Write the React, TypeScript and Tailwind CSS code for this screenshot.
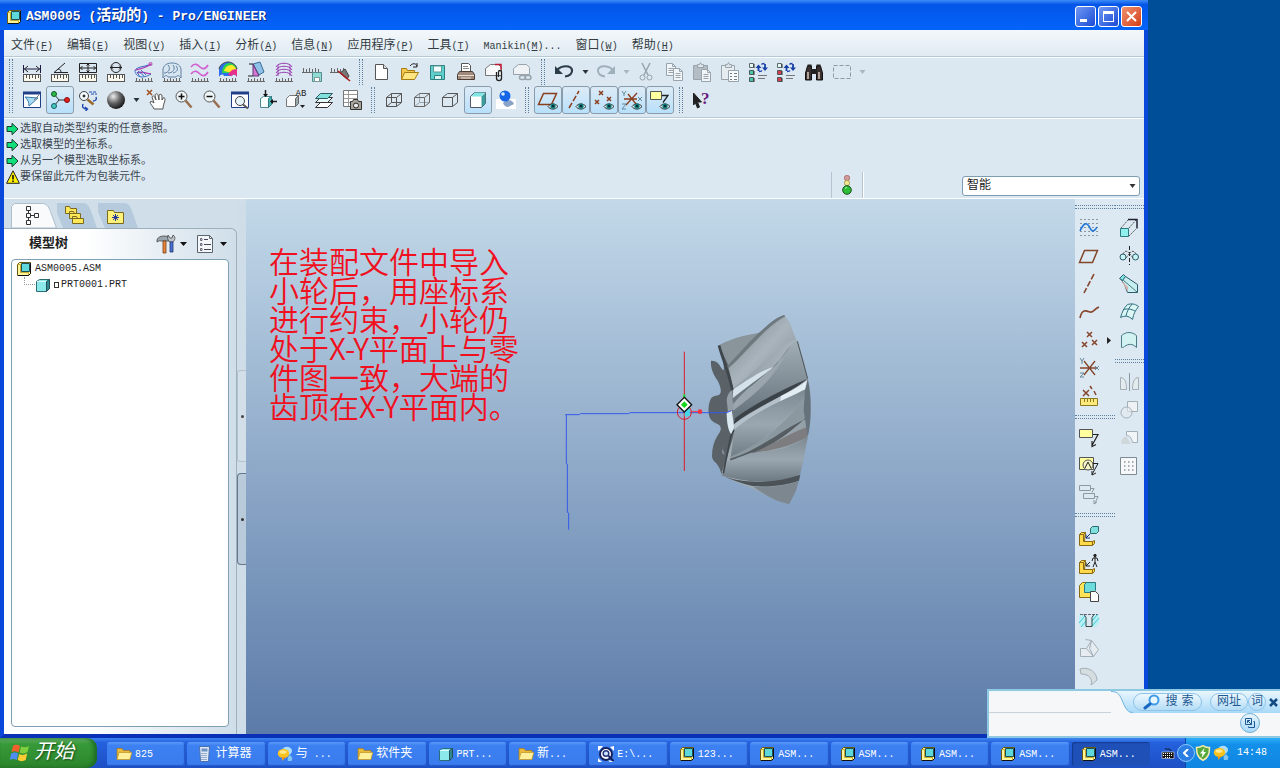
import React from "react";

type Kids = { children?: React.ReactNode };

/* Latin runs are set smaller than the ideographs so that two of them fill one square. */
function Mixed({ text, latin = "text-[10px]" }: { text: string; latin?: string }) {
  return (
    <>
      {text.split(/([\x20-\x7e]+)/).filter(Boolean).map((part, i) =>
        /^[\x20-\x7e]/.test(part) ? (
          <span key={i} className={`whitespace-pre ${latin}`}>{part}</span>
        ) : (
          <span key={i}>{part}</span>
        )
      )}
    </>
  );
}

function Svg({ children }: Kids) {
  return (
    <svg viewBox="0 0 22 22" className="h-[22px] w-[22px] shrink-0" fill="none" stroke="#222" strokeWidth="1" aria-hidden="true">
      {children}
    </svg>
  );
}

function Tool({ label, on, children }: Kids & { label: string; on?: boolean }) {
  return (
    <button
      type="button"
      aria-label={label}
      className={
        on
          ? "flex h-7 w-7 shrink-0 items-center justify-center rounded-[3px] border border-[#8a9bab] bg-linear-to-b from-[#dcebf6] to-[#b8e0fb]"
          : "flex h-7 w-7 shrink-0 items-center justify-center"
      }
    >
      <Svg>{children}</Svg>
    </button>
  );
}

function Drop({ label, muted, wide }: { label: string; muted?: boolean; wide?: boolean }) {
  return (
    <button type="button" aria-label={label} className={wide ? "flex h-7 w-[14px] items-center justify-center" : "flex h-7 w-3 items-center justify-center"}>
      <svg viewBox="0 0 7 4" className="h-1 w-[7px]" fill={muted ? "#a9b6c0" : "#2b3338"} aria-hidden="true">
        <path d="M0.5 0h6L3.5 4z" />
      </svg>
    </button>
  );
}

const Grip = () => <span className="mx-[5px] my-[1px] w-1 shrink-0 self-stretch border-x border-dotted border-[#5d7f9c]" />;
const GripRow = () => <span className="my-[5px] h-1 shrink-0 self-stretch border-y border-dotted border-[#5d7f9c]" />;

const Ruler = () => (
  <>
    <rect x="2.5" y="13.5" width="17" height="7" fill="#fbf8ee" stroke="#555" />
    <path d="M5.5 14v3M8.5 14v4M11.5 14v3M14.5 14v4M17.5 14v3" stroke="#555" />
  </>
);
const Ticks = () => <path d="M2 20.5h18M3.5 17v3M6.5 18v2M9.5 17v3M12.5 18v2M15.5 17v3M18.5 17v3" stroke="#666" />;

const Eye = () => (
  <>
    <path d="M11 17.5c2.5-3.5 7-3.5 10 0c-3 3.5-7.5 3.5-10 0z" fill="#d9ecec" stroke="#333" />
    <circle cx="16" cy="17.2" r="2.6" fill="#117a78" stroke="none" />
    <circle cx="16" cy="17" r="1" fill="#012" stroke="none" />
  </>
);

const BoxOutline = () => <path d="M3.5 8.5h10v9h-10zM8.5 4.5h10v9h-10zM3.5 8.5l5-4M13.5 8.5l5-4M13.5 17.5l5-4M3.5 17.5l5-4" stroke="#555" />;
const BoxHidden = () => (
  <>
    <path d="M8.5 5v8.5M8.5 13.5h10M3.5 17.5l5-4" stroke="#9aa7b0" />
    <path d="M3.5 8.5h10v9h-10zM3.5 8.5l5-4h10v9l-5 4M13.5 8.5l5-4" stroke="#666" />
  </>
);
const BoxClear = () => <path d="M3.5 8.5h10v9h-10zM3.5 8.5l5-4h10v9l-5 4M13.5 8.5l5-4" stroke="#555" />;
const Page = ({ x, y, c }: { x: number; y: number; c: string }) => (
  <g transform={`translate(${x} ${y})`} stroke={c} fill="#f3f6f8">
    <path d="M.5.5h6l3 3v9h-9z" />
    <path d="M6.5.5v3h3M2.5 5.5h5M2.5 7.5h5M2.5 9.5h5" fill="none" />
  </g>
);

const Flow = ({ tone }: { tone: string }) => (
  <>
    <path d="M2.5 2.5h4v4h-4z" fill="#e6f8f4" stroke="#5a6a6a" />
    <path d="M2.5 9.5h4v4h-4zM2.5 16.5h4v4h-4z" fill={tone} stroke="#4a5a5a" />
    <path d="M7 3v4M7 10v4M7 17v4" stroke="#333" />
    <path d="M11 14.5h9M11 17.5h7" stroke="#777" />
    <path d="M11.5 10V6M18 3v5" stroke="#173fa8" strokeWidth="1.8" />
    <path d="M12 10.5c1.500 0 2.500 0 3-1M17.500 2.500c-1.500 0-2.500 0-3 1" stroke="#173fa8" strokeWidth="1.5" />
    <path d="M8.5 7h6l-3-3.5zM15 6.500h6l-3 3.5z" fill="#173fa8" stroke="none" />
  </>
);

function AsmIcon({ edge = "#6a5a10" }: { edge?: string }) {
  return (
    <svg viewBox="0 0 16 16" className="h-4 w-4 shrink-0" aria-hidden="true">
      <path d="M1.5 3.5l2-2h11v11l-2 2h-11z" fill="#fff59a" stroke={edge} />
      <path d="M5.5 2.5h8v8h-8z" fill="#5fd8dc" stroke="#1d5054" />
      <path d="M1.5 3.5h3v8h8v3" fill="none" stroke="#c9a92c" />
      <path d="M14.5 2v10.5l-2 2H2" fill="none" stroke="#111" />
    </svg>
  );
}
function PartIcon() {
  return (
    <svg viewBox="0 0 16 16" className="h-4 w-4 shrink-0" aria-hidden="true">
      <path d="M1.5 4.5l3-2h10v9l-3 3h-10z" fill="#8be9ec" stroke="#2c6e78" />
      <path d="M11.5 4.5l3-2v9l-3 3z" fill="#2f8790" stroke="#24505a" />
      <path d="M2 4.5h9" stroke="#dffcff" />
    </svg>
  );
}
function FolderIcon() {
  return (
    <svg viewBox="0 0 16 16" className="h-4 w-4 shrink-0" aria-hidden="true">
      <path d="M1 13V2.5h5l1.5 2H14V13z" fill="#e9b93a" stroke="#a8761a" strokeWidth=".7" />
      <path d="M1 13.5L3 6.5h12.8L13.8 13.5z" fill="#fff09c" stroke="#c49a2c" strokeWidth=".8" />
    </svg>
  );
}
function ChatIcon() {
  return (
    <svg viewBox="0 0 16 16" className="h-4 w-4 shrink-0" aria-hidden="true">
      <ellipse cx="10" cy="5" rx="5" ry="4.2" fill="#a9ddf8" />
      <path d="M11 15c-1-3 0-5 2-6l2.5 3-1 3z" fill="#83c6f0" />
      <ellipse cx="6.5" cy="7.5" rx="5.7" ry="4.5" fill="#fbc21d" />
      <path d="M5 11l0 4 4-4z" fill="#f29a12" />
      <ellipse cx="6" cy="6" rx="3.5" ry="1.8" fill="#ffe98c" />
    </svg>
  );
}
function CalcIcon() {
  return (
    <svg viewBox="0 0 16 16" className="h-4 w-4 shrink-0" aria-hidden="true">
      <path d="M3.5 .5h10l-1 15h-8z" fill="#dfe9f6" stroke="#4a6fa8" />
      <path d="M5.5 2.5h6V5.5h-6z" fill="#6f93c4" />
      <path d="M5.5 7.5h6M5.5 9.5h6M5.5 11.5h6M5.5 13.5h6" stroke="#4f6f9c" strokeDasharray="1 1" />
    </svg>
  );
}
function FinderIcon() {
  return (
    <svg viewBox="0 0 16 16" className="h-4 w-4 shrink-0" aria-hidden="true">
      <path d="M0 0h5L2 3.5 0 5zM16 0v5l-4-4zM0 16v-4l4 4zM16 16h-4l-4-3z" fill="#fff" />
      <circle cx="8" cy="8" r="6" fill="#fff" stroke="#15205c" strokeWidth="2" />
      <circle cx="8" cy="7.5" r="2.8" fill="#cfe0ff" stroke="#24347a" strokeWidth="1.5" />
      <path d="M10.5 10l5 5" stroke="#15205c" strokeWidth="2" />
    </svg>
  );
}

const menus: [string, string, string][] = [
  ["文件", "F", ""], ["编辑", "E", ""], ["视图", "V", ""], ["插入", "I", ""], ["分析", "A", ""], ["信息", "N", ""],
  ["应用程序", "P", ""], ["工具", "T", ""], ["Manikin", "M", "..."], ["窗口", "W", ""], ["帮助", "H", ""],
];

function TitleBar() {
  return (
    <header className="flex h-[30px] shrink-0 items-center gap-1 bg-linear-to-b from-[#3c8cf8] from-0% via-[#0455e8] via-15% to-[#0464fa] pt-[3px] pr-[6px] pl-[6px]">
      <AsmIcon />
      <h1 className="flex-1 text-[15px] leading-5 font-bold whitespace-nowrap text-white [text-shadow:1px_1px_0_#0a2a80]">
        <Mixed text="ASM0005 (活动的) - Pro/ENGINEER" latin="text-[13px]" />
      </h1>
      <div className="flex gap-[2px]">
        <button type="button" aria-label="最小化" className="flex h-[21px] w-[21px] items-end rounded-[3px] border border-white bg-linear-to-br from-[#6f97f3] to-[#1b48d4] pb-1 pl-1">
          <span className="h-[3px] w-[7px] bg-white" />
        </button>
        <button type="button" aria-label="最大化" className="flex h-[21px] w-[21px] items-center justify-center rounded-[3px] border border-white bg-linear-to-br from-[#6f97f3] to-[#1b48d4]">
          <span className="h-[11px] w-[11px] border border-t-[3px] border-white" />
        </button>
        <button type="button" aria-label="关闭" className="flex h-[21px] w-[21px] items-center justify-center rounded-[3px] border border-white bg-linear-to-br from-[#f0906e] to-[#d33a0c]">
          <svg viewBox="0 0 11 11" className="h-[11px] w-[11px]" stroke="#fff" strokeWidth="2" aria-hidden="true"><path d="M1 1l9 9M10 1l-9 9" /></svg>
        </button>
      </div>
    </header>
  );
}

function ToolRows() {
  const brown = "#8b3e1d";
  const mute = "#98a3ab";
  return (
    <div className="shrink-0 overflow-hidden border-t border-b border-t-[#b4cad8] border-b-[#b4cad8] pt-[1px] pb-[3px] shadow-[inset_0_1px_0_#fff]">
      <div className="flex h-7 items-center">
        <Grip />
        <Tool label="距离"><path d="M2.5 4v8M19.5 4v8M3 8h16" stroke="#1a1a3a" /><path d="M7 5L3.5 8 7 11M15 5l3.5 3-3.5 3" /><Ruler /></Tool>
        <Tool label="角"><path d="M16 2L5 11.5h14M9 8c2 0 3 1 3 3.5" /><Ruler /></Tool>
        <Tool label="区域"><path d="M2.5 2.5h17v9h-17zM11 3v8M3 7h16" /><path d="M5.5 5L3.5 7l2 2M16.5 5l2 2-2 2M9.5 4.5L11 3l1.5 1.5M9.5 9.5L11 11l1.5-1.5" /><Ruler /></Tool>
        <Tool label="直径"><circle cx="11" cy="6.5" r="5" /><path d="M5 6.5h12M8 4.5l-2 2 2 2M14 4.5l2 2-2 2" /><Ruler /></Tool>
        <Tool label="曲率"><path d="M2 9c5-1 9-1 16-6M4 12c4-2 8 0 14 1" stroke="#b23cb0" strokeWidth="1.4" /><path d="M2 9c0 4 2 6 6 7 4 0 7-1 10-3M3 8c4-3 8-2 12-4M5 10l6 5M8 9l5 5M4 11l3 5" stroke="#3d6fc4" /><circle cx="17.5" cy="3" r="1.5" stroke="#b23cb0" /><Ticks /></Tool>
        <Tool label="截面"><path d="M2 8C3 3 8 2 11 2s8 1 9 6v9c-2-3-4-3-5-1H7c-1-2-3-2-5 1z" fill="#d8e6f2" stroke="#5f7f9f" /><path d="M3 12c5 0 7-5 4-8M7 12c5 0 8-4 5-8M12 12c4-1 6-4 3-7" stroke="#5f7f9f" /><Ticks /></Tool>
        <Tool label="偏移"><path d="M2 6c4-5 7-2 9 0s5 3 8-2M2 13c4-5 7-2 9 0s5 3 8-2" stroke="#d25fd0" strokeWidth="1.6" /><Ticks /></Tool>
        <Tool label="着色曲率">
          <path d="M2 8C3 3 8 1 11 1s8 2 9 7v8c-2-3-4-3-5-1H7c-1-2-3-2-5 1z" fill="#2b6ff0" stroke="none" />
          <path d="M5 12c0-6 3-10 8-10 4 1 7 3 7 6l-4 4z" fill="#2bd24e" stroke="none" />
          <path d="M7 10c1-4 4-6 8-6 3 1 4 3 4 5l-4 3z" fill="#ffe92b" stroke="none" />
          <path d="M11 14c1-3 4-6 9-6v8c-2-3-4-3-5-1z" fill="#e8308a" stroke="none" />
          <path d="M2 8C3 3 8 1 11 1s8 2 9 7" stroke="#444" /><Ticks />
        </Tool>
        <Tool label="拔模"><path d="M8 3l7-2 4 10-5 3z" fill="#8fc2e8" stroke="#3a6a94" /><path d="M8 3v12h6z" fill="#d774d4" stroke="#5a3a74" /><path d="M4 3h4M8 15H3" /><Ticks /></Tool>
        <Tool label="斜率"><path d="M3 6C5 1 17 1 19 6M3 9C5 4 17 4 19 9M3 12C5 7 17 7 19 12M3 15c2-5 14-5 16 0M5 4v11M17 4v11" stroke="#9a3fb0" /><Ticks /></Tool>
        <Tool label="保存分析"><path d="M1 11.5h18M2.5 7v4M5.5 8v3M8.5 7v4M11.5 8v3M14.5 7v4M17.5 8v3" stroke="#666" /><path d="M11.5 11.5h9v9h-9z" fill="#8fdcd4" stroke="#5a8a8a" /><path d="M13.5 16.5h5v4h-5z" fill="#fff" stroke="#7a9a9a" /></Tool>
        <Tool label="隐藏分析"><path d="M1 11.5h14M2.5 7v4M5.5 8v3M8.5 7v4M11.5 8v3M14.5 7v4" stroke="#666" /><path d="M11 12l7 6 2-3-4-7z" fill="#777" stroke="#444" /><path d="M9 10l12 10" stroke="#b01818" strokeWidth="1.5" /></Tool>
        <Grip />
        <Tool label="新建"><path d="M4.5 3.5h8l4 4v11h-12z" fill="#fff" stroke="#555" /><path d="M12.5 3.5v4h4" fill="#ddd" stroke="#555" /></Tool>
        <Tool label="打开"><path d="M2.5 18.5v-11h5l1 2h7v3" fill="#f2c94c" stroke="#a87c14" /><path d="M2.5 18.5l3-7h14l-4 7z" fill="#ffe680" stroke="#a87c14" /><path d="M11 5c2-3 6-3 7 0M18 2v4h-4" /></Tool>
        <Tool label="保存"><path d="M3.5 4.5h14v14h-14z" fill="#5fcfcb" stroke="#2c8080" /><path d="M6.5 5h8v6h-8z" fill="#f4fbfb" stroke="#5a9a9a" /><path d="M7.5 14.5h7v4h-7z" fill="#e0f4f4" stroke="#2c8080" /></Tool>
        <Tool label="打印"><path d="M6.5 11V2.5h7l2 2V11" fill="#fff" stroke="#555" /><path d="M8 5.5h5M8 7.5h6" stroke="#888" /><path d="M2.5 13.5l2-3h13l2 3v5h-17z" fill="#a08a7c" stroke="#4c3c34" /><path d="M3 14.5h16M6 17h10" stroke="#e8dcd0" /></Tool>
        <Tool label="发送"><path d="M2.5 14.5v-7l5-4h8l3 3v8z" fill="#f8fafb" stroke="#777" /><path d="M12 3.5l6 0v5" stroke="#c01830" strokeWidth="1.5" /><path d="M13.5 11v6c0 3.5 5 3.5 5 0v-6c0-2-3-2-3 0v5" strokeWidth="1.3" /></Tool>
        <Tool label="发送链接"><path d="M2.5 13.5v-6l5-4h8l3 3v7z" fill="#eef2f4" stroke={mute} /><rect x="8.5" y="14.5" width="6" height="4" rx="2" stroke={mute} strokeWidth="1.5" /><rect x="14" y="14.5" width="6" height="4" rx="2" stroke={mute} strokeWidth="1.5" /></Tool>
        <Grip />
        <Tool label="撤消"><path d="M4 9c5-5 14-5 15 0 .5 3-2 6-7 6.500" stroke="#2c3d4a" strokeWidth="2.2" /><path d="M2 5v8h8z" fill="#2c3d4a" stroke="none" /></Tool>
        <Drop label="撤消列表" wide />
        <Tool label="重做"><path d="M18 9C13 4 4 4 3 9c-.5 3 2 6 7 6.500" stroke="#9fb0bb" strokeWidth="2" /><path d="M20 5v8h-8z" fill="#9fb0bb" stroke="none" /></Tool>
        <Drop label="重做列表" muted />
        <Tool label="剪切"><path d="M7 2l6 12M15 2L9 14" stroke={mute} strokeWidth="1.5" /><circle cx="7.5" cy="16.5" r="2.5" stroke={mute} /><circle cx="14.5" cy="16.5" r="2.5" stroke={mute} /></Tool>
        <Tool label="复制"><Page x={3} y={2} c={mute} /><Page x={10} y={7} c={mute} /></Tool>
        <Tool label="粘贴"><path d="M2.5 4.5h14v14h-14z" fill="#b4bdc3" stroke={mute} /><path d="M6.5 6.5v-3h2l1-2 1 2h2v3z" fill="#dde4e8" stroke={mute} /><Page x={10} y={8} c={mute} /></Tool>
        <Tool label="选择性粘贴"><path d="M2.5 4.5h13v14h-13z" fill="#e6edf1" stroke={mute} /><path d="M6.5 6.5v-3h2l1-2 1 2h2v3z" fill="#dde4e8" stroke={mute} /><path d="M9.5 9.5h10v11h-10z" fill="#f7f9fa" stroke={mute} /><path d="M11 12.5h2M15 12.5h3M11 15.5h2M15 15.5h3M11 18.5h2M15 18.5h3" stroke="#6f7c86" /></Tool>
        <Tool label="再生"><Flow tone="#49c9a8" /></Tool>
        <Tool label="再生管理器"><Flow tone="#e03a50" /></Tool>
        <Tool label="查找"><path d="M2.5 19V12l2-7h4v14zM19.5 19V12l-2-7h-4v14z" fill="#3a3030" stroke="#111" /><path d="M8 8h6v5H8z" fill="#222" stroke="none" /><path d="M5 11v7M16 11v7" stroke="#d8c8b8" strokeWidth="1.5" /><path d="M4.5 4.5h4M13.5 4.5h4" strokeWidth="2" /></Tool>
        <Tool label="选择框"><path d="M2.5 4.5h17v13h-17z" stroke="#8f9aa2" strokeDasharray="4 2" /></Tool>
        <Drop label="选择框列表" muted />
      </div>
      <div className="flex h-7 items-center">
        <Grip />
        <Tool label="重画"><path d="M2.5 3.5h17v15h-17z" fill="#fff" stroke="#1f3f88" /><path d="M2 2.5h18v3H2z" fill="#1f3f88" stroke="none" /><path d="M4 8l13 1-9 8c0-4-1-6-4-9z" fill="#a8dcf4" stroke="#3a7aa8" /><path d="M18 6l-5 5" stroke="#777" /></Tool>
        <Tool label="旋转中心" on><path d="M5 5l5 6h8M5 17l5-6" stroke="#333" /><circle cx="5" cy="5" r="2.5" fill="#2fb84a" stroke="#115c20" /><circle cx="5" cy="17" r="2.5" fill="#45c8c4" stroke="#15605c" /><circle cx="18" cy="11" r="2.5" fill="#e81c1c" stroke="#801010" /></Tool>
        <Tool label="方向模式"><circle cx="7" cy="7" r="4.5" fill="#f2f8fb" stroke="#444" /><circle cx="7" cy="7" r="1" fill="#222" /><path d="M10.5 10.5l6 5" stroke="#9a6a2c" strokeWidth="2.5" /><path d="M12 3h7M14 5h6" stroke="#1e46b0" strokeDasharray="3 1" /><path d="M19 8c1 3-1 4-3 4M6 15c-1 3 0 5 4 5M8 18l2.5 2-2 2" stroke="#1e46b0" strokeWidth="1.4" /></Tool>
        <Tool label="外观库">
          <defs><radialGradient id="ball" cx=".35" cy=".3" r=".75"><stop offset="0" stopColor="#eee" /><stop offset=".5" stopColor="#666" /><stop offset="1" stopColor="#111" /></radialGradient></defs>
          <circle cx="11" cy="11" r="9" fill="url(#ball)" stroke="none" />
        </Tool>
        <Drop label="外观列表" />
        <Tool label="平移"><path d="M2 1l5 5M7 1L2 6" stroke="#a05020" strokeWidth="1.5" /><path d="M9 20c-1-3-4-5-4-7 1-1 3 0 4 1L7 8c1-2 2-1 3 1l1 2-1-5c1-2 3-1 3 0l1 5 0-5c1-1 3-1 3 1v4l1-2c2-1 2 1 2 2-.5 3-2 5-2 9z" fill="#fff" stroke="#555" /></Tool>
        <Tool label="放大"><circle cx="8.5" cy="7.5" r="5.5" fill="#eef6f8" stroke="#555" /><path d="M5.5 7.5h6M8.5 4.5v6" stroke="#111" strokeWidth="1.5" /><path d="M12.5 11.5l6 7" stroke="#9a6e4c" strokeWidth="2.5" /></Tool>
        <Tool label="缩小"><circle cx="8.5" cy="7.5" r="5.5" fill="#eef6f8" stroke="#555" /><path d="M5.5 7.5h6" stroke="#111" strokeWidth="1.5" /><path d="M12.5 11.5l6 7" stroke="#9a6e4c" strokeWidth="2.5" /></Tool>
        <Tool label="重新调整"><path d="M2.5 3.5h17v15h-17z" fill="#fff" stroke="#1f3f88" /><path d="M2 2.5h18v3H2z" fill="#1f3f88" stroke="none" /><circle cx="11" cy="12" r="4.5" fill="#e6f4fa" stroke="#444" /><path d="M14 15.5l5 4" stroke="#555" strokeWidth="2" /></Tool>
        <Tool label="重定向"><path d="M3.5 9.5l3-2h8v8l-3 3h-8z" fill="#f8ffff" stroke="#4a8a90" /><path d="M11.5 9.5l3-2v8l-3 3z" fill="#48b8b4" stroke="#2c7a80" /><path d="M8.5 1v6M20 12.5h-6" strokeWidth="1.5" /><path d="M6 5h5l-2.5 3zM16 10v5l-3-2.5z" fill="#111" stroke="none" /></Tool>
        <Tool label="已命名视图"><path d="M1.5 9.5l3-3h9v8l-3 3h-9z" fill="#f8fafb" stroke="#777" /><path d="M10.5 9.5l3-3v8l-3 3z" fill="#9aa" stroke="#666" /><text x="10.5" y="7" fontSize="9" fill="#222" stroke="none" fontFamily="Liberation Mono">AB</text><path d="M15 16h5l-2.5 3z" fill="#222" stroke="none" /></Tool>
        <Tool label="层"><path d="M2.5 18.5l5-5h12l-5 5z" fill="#fff" stroke="#333" /><path d="M2.5 13.5l5-5h12l-5 5z" fill="#e6fafa" stroke="#333" /><path d="M2.5 9.5l5-5h12l-5 5z" fill="#7fe0de" stroke="#2c5a60" /></Tool>
        <Tool label="视图管理器"><path d="M2.5 1.5h14v16h-14z" fill="#fff" stroke="#777" /><path d="M3 5.5h13M3 9.5h13M3 13.5h13M7.5 2v15" stroke="#999" /><path d="M9.5 12.5h2l1-2h4l1 2h3v8h-11z" fill="#a8a49c" stroke="#333" /><circle cx="15" cy="16.5" r="2.5" fill="#eee" /></Tool>
        <Grip />
        <Tool label="线框"><BoxOutline /></Tool>
        <Tool label="隐藏线"><BoxHidden /></Tool>
        <Tool label="消隐"><BoxClear /></Tool>
        <Tool label="着色" on><path d="M3.5 7.5l4-4h11v11l-4 4h-11z" fill="#fff" stroke="#556" /><path d="M4 7.5l4-4h10l-4 4z" fill="#7fe6e4" stroke="none" /><path d="M14.5 7.5l4-4v11l-4 4z" fill="#3c9c9c" stroke="none" /></Tool>
        <Tool label="增强真实感"><path d="M1 10h20v10H1z" fill="#fff" stroke="none" /><path d="M8 14c3-4 9-4 11 1l-6 3c-3 0-4-2-5-4z" fill="#8aa4c8" stroke="none" /><circle cx="10" cy="7" r="5.5" fill="#1766e8" stroke="none" /><circle cx="8" cy="5" r="1.8" fill="#d8ecff" stroke="none" /></Tool>
        <Grip />
        <Tool label="基准平面显示" on><path d="M1.5 15.5l5-11h13l-5 11z" stroke={brown} strokeWidth="1.5" /><Eye /></Tool>
        <Tool label="基准轴显示" on><path d="M4 19L14 2" stroke={brown} strokeWidth="1.5" strokeDasharray="6 2" /><Eye /></Tool>
        <Tool label="基准点显示" on><path d="M6 2l4 4M10 2L6 6M2 11l4 4M6 11l-4 4M14 8l4 4M18 8l-4 4" stroke={brown} strokeWidth="1.5" /><Eye /></Tool>
        <Tool label="坐标系显示" on><path d="M3 10h13M5 16L16 4M7 5l8 10" stroke={brown} strokeWidth="1.3" /><path d="M1 2l2 3 2-3M3 5v2M1 15h4l-4 5h4M17 8l4 4M21 8l-4 4" stroke="#5f8ca0" /><Eye /></Tool>
        <Tool label="注释显示" on><path d="M1.5 2.5h11v8h-11z" fill="#ffffa0" stroke="#555" /><path d="M13 6.5h6l-5 7" strokeWidth="1.3" /><Eye /></Tool>
        <Grip />
        <Tool label="上下文帮助"><path d="M2.5 4l8 9h-4l2 5-2 1-2-5-2 2z" fill="#222" /><text x="10" y="15" fontSize="17" fontWeight="bold" fill="#6b1a80" stroke="none" fontFamily="Liberation Serif">?</text></Tool>
      </div>
    </div>
  );
}

const messages = [
  { warn: false, text: "选取自动类型约束的任意参照。" },
  { warn: false, text: "选取模型的坐标系。" },
  { warn: false, text: "从另一个模型选取坐标系。" },
  { warn: true, text: "要保留此元件为包装元件。" },
];

function MessageArea() {
  return (
    <div className="flex h-[81px] shrink-0 items-end border-b border-white shadow-[inset_0_1px_0_#fff]">
      <ul className="flex-1 self-start pt-[3px] pl-[2px] text-[11px] leading-4 text-[#3c4650]">
        {messages.map((m) => (
          <li key={m.text} className="flex h-4 items-center">
            <svg viewBox="0 0 14 14" className="h-[14px] w-[14px] shrink-0" aria-hidden="true">
              {m.warn ? (
                <>
                  <path d="M7 .8L13.4 13.3H.6z" fill="#fff200" stroke="#222" />
                  <path d="M7 5v4.5M7 10.5v1.5" stroke="#111" strokeWidth="1.6" />
                </>
              ) : (
                <path d="M1 4.5h5V1.3L12 7l-6 5.7V9.5H1z" fill="#0fe07c" stroke="#1c3a2c" />
              )}
            </svg>
            <span>{m.text}</span>
          </li>
        ))}
      </ul>
      <div className="mr-[99px] flex h-[26px] w-8 items-center justify-center border-x border-[#b4c4d0] shadow-[1px_0_0_#fff]">
        <svg viewBox="0 0 12 20" className="h-5 w-3" aria-hidden="true">
          <rect x="3.5" y=".5" width="5" height="5" rx="2" fill="#d49a98" stroke="#a87070" />
          <rect x="3.5" y="5.5" width="5" height="5" rx="2" fill="#f0e48c" stroke="#a89c50" />
          <circle cx="6" cy="15" r="4.3" fill="#2ebd36" stroke="#174f1a" />
          <path d="M4 13.5l2-1.5" stroke="#b8ffb8" />
        </svg>
      </div>
      <div className="relative mr-1 mb-[2px] flex h-5 w-[178px]">
        <select aria-label="选择过滤器" className="h-5 w-full appearance-none rounded-[3px] border border-[#7d9db2] bg-white pl-1 text-[12px] leading-[18px] text-[#222]">
          <option>智能</option>
        </select>
        <svg viewBox="0 0 7 4" className="pointer-events-none absolute top-2 right-1 h-1 w-[7px]" fill="#333" aria-hidden="true"><path d="M.5 0h6l-3 4z" /></svg>
      </div>
    </div>
  );
}

function LeftPanel() {
  return (
    <aside className="flex w-[242px] shrink-0 bg-[#d0dee9] pt-1">
      <div className="flex min-w-0 flex-1 flex-col">
        <div className="flex h-[25px] pl-[7px]">
          <button type="button" aria-label="模型树" className="flex w-[46px] items-center">
            <svg viewBox="0 0 46 25" className="h-[25px] w-[46px]" aria-hidden="true">
              <path d="M.5 25V3.5l3-3h28c4 0 6 3 8 8l6 16.5z" fill="#f8fafc" stroke="#aebfcc" />
              <path d="M15.5 3.5h4v4h-4zM15.5 10.5h4v4h-4zM15.5 17.5h4v4h-4zM23.5 10.5h4v4h-4z" fill="#fff" stroke="#333" />
              <path d="M17.5 8v2M17.5 15v2M20 12.5h3" stroke="#333" />
            </svg>
          </button>
          <button type="button" aria-label="文件夹浏览器" className="flex w-[41px] items-center">
            <svg viewBox="0 0 41 25" className="h-[25px] w-[41px]" aria-hidden="true">
              <path d="M-4 0h30c4 0 6 3 8 8l6 17H6z" fill="#b5cbdd" />
              <path d="M8.5 10.5v-7h4l1 2h6v5zM12.5 15.5v-7h4l1 2h6v5zM15.5 20.5v-7h4l1 2h6v5z" fill="#ffe75a" stroke="#7a6a20" />
            </svg>
          </button>
          <button type="button" aria-label="收藏夹" className="flex w-[43px] items-center">
            <svg viewBox="0 0 43 25" className="h-[25px] w-[43px]" aria-hidden="true">
              <path d="M-4 0h30c5 0 6 3 8 8l6 17H7z" fill="#b5cbdd" />
              <path d="M9.5 20.5v-13h6l1 2h9v11z" fill="#fff27a" stroke="#7a6a20" />
              <path d="M17.5 11v7M14 14.5h7M15 12l5 5M20 12l-5 5" stroke="#24389c" />
            </svg>
          </button>
        </div>
        <div className="flex min-h-0 flex-1 flex-col rounded-tr-md border-t border-r border-[#9fb0bd] bg-linear-to-r from-white from-35% to-[#cfdee9] pr-[7px] pb-[7px] pl-[7px]">
          <div className="flex h-[30px] items-center">
            <h2 className="flex-1 pl-[18px] text-[13px] leading-5 font-bold text-[#222]">模型树</h2>
            <button type="button" aria-label="设置" className="flex items-center gap-1 pr-[9px]">
              <svg viewBox="0 0 20 20" className="h-5 w-5" aria-hidden="true">
                <path d="M1 6c1-4 7-5 12-3v4H5C3 6 2 8 1 8z" fill="#9aa6ae" stroke="#444" strokeWidth=".8" />
                <path d="M7 7h3v12H7z" fill="#e8873c" stroke="#7a3c14" strokeWidth=".8" />
                <path d="M12 1l2 3h2l1-3c3 2 2 5 0 7h-3c-2-1-3-4-2-7z" fill="#bcc4c9" stroke="#444" strokeWidth=".8" />
                <path d="M14 8h3v10h-3z" fill="#4a72d4" stroke="#1c3474" strokeWidth=".8" />
              </svg>
              <svg viewBox="0 0 7 4" className="h-1 w-[7px]" aria-hidden="true"><path d="M0 0h7L3.5 4z" fill="#111" /></svg>
            </button>
            <button type="button" aria-label="显示" className="flex items-center gap-1 pr-[2px]">
              <svg viewBox="0 0 20 20" className="h-5 w-5" aria-hidden="true">
                <path d="M1.5 1.5h12l3 3v14h-15z" fill="#f4f7fa" stroke="#5a6570" />
                <path d="M13.5 1.5v3h3" fill="none" stroke="#5a6570" />
                <path d="M8 5.5h4M8 10.5h7M8 15.5h7" stroke="#445" />
                <path d="M4.5 4.5h1.5v2H4.5zM4.5 9.5h1.5v2H4.5zM4.5 14.5h1.5v2H4.5z" fill="#fff" stroke="#445" strokeWidth=".8" />
              </svg>
              <svg viewBox="0 0 7 4" className="h-1 w-[7px]" aria-hidden="true"><path d="M0 0h7L3.5 4z" fill="#111" /></svg>
            </button>
          </div>
          <ul className="min-h-0 flex-1 rounded-[4px] border border-[#7fa0b2] bg-white text-[10px] leading-4 text-[#222]">
            <li className="flex h-[17px] items-center gap-[3px] pl-1"><AsmIcon /><span>ASM0005.ASM</span></li>
            <li className="flex h-4 items-center pl-[12px]">
              <span className="mb-2 h-2 w-[11px] border-b border-l border-dotted border-[#999]" />
              <PartIcon />
              <span className="mr-[2px] ml-[3px] h-[6px] w-[5px] border border-[#333]" />
              <span>PRT0001.PRT</span>
            </li>
          </ul>
        </div>
      </div>
      <div className="flex w-[9px] flex-col justify-start gap-[11px] bg-[#cfdde8] pt-[167px]">
        <button type="button" aria-label="折叠导航器" className="flex h-[92px] items-center justify-center rounded-l-[3px] border border-r-0 border-[#b4c3cf] bg-[#d2dfe9]"><span className="h-[3px] w-[3px] rounded-full bg-[#444]" /></button>
        <button type="button" aria-label="展开浏览器" className="flex h-[92px] items-center justify-center rounded-l-[4px] border border-r-0 border-[#68788a] bg-[#b9cadb]"><span className="h-[3px] w-[3px] rounded-full bg-[#333]" /></button>
      </div>
    </aside>
  );
}

const noteLines = ["在装配文件中导入", "小轮后，用座标系", "进行约束，小轮仍", "处于X-Y平面上与零", "件图一致，大端的", "齿顶在X-Y平面内。"];

function Viewport() {
  return (
    <main className="relative min-w-0 flex-1 overflow-hidden bg-linear-to-b from-[#c3d9e9] to-[#5c7ba8]">
      <p className="pt-[47px] pl-[23px] font-['Liberation_Sans_Narrow','Noto_Sans_CJK_SC',sans-serif] text-[30px] leading-[29px] font-[350] whitespace-nowrap text-[#f01020]">
        {noteLines.map((line) => (
          <span key={line} className="block">{line}</span>
        ))}
      </p>
      <svg viewBox="60 0 780 720" className="absolute top-[101px] left-[314px] h-[240px] w-[260px]" fill="none" aria-label="小轮模型">
        <defs>
          <linearGradient id="toothA" x1="0" y1="0" x2="1" y2="1"><stop offset="0" stopColor="#78838b" /><stop offset=".5" stopColor="#a9b4bc" /><stop offset="1" stopColor="#7f8b94" /></linearGradient>
          <linearGradient id="toothB" x1="0" y1="0" x2="0" y2="1"><stop offset="0" stopColor="#a3afb7" /><stop offset="1" stopColor="#626e77" /></linearGradient>
          <linearGradient id="toothC" x1="0" y1="0" x2="0" y2="1"><stop offset="0" stopColor="#7d8991" /><stop offset=".5" stopColor="#9aa7b1" /><stop offset="1" stopColor="#6d7981" /></linearGradient>
        </defs>
        <path d="M513 182c12 0 20 4 26 14 6 10 10 16 12 14 2-8-2-24-2-34l-12-38 60 40 30 120-20 150-62 80c-2-16-8-28-16-38-6-6-12-10-13-22 0-24 6-44 16-60 8-12 14-20 8-30-6-8-20-8-28-20-10-14-8-50 2-64 6-8 22-6 26-12 6-10 0-26-7-40-14-20-22-40-20-60z" fill="#5a6267" />
        <path d="M537 136l20-10 50-16 48-10 35-30 42-25 18 25 20 52 22 60 12 56 8 60-1 60-10 60-15 80-18 45-20 69-48-15-60-30-50-20-47-22 20-60 18-60-2-90-2-60-12-60z" fill="url(#toothA)" />
        <path d="M540 136c40-22 70-30 115-36L570 205z" fill="#89949b" />
        <path d="M655 100c25-20 45-45 77-55l4 4c-50 25-110 95-172 160l-3-10c35-36 62-68 94-99z" fill="#6d777e" />
        <path d="M736 50c14 20 20 40 30 68-70 30-110 90-186 146l-14-60c60-50 110-120 170-154z" fill="url(#toothA)" />
        <path d="M766 118l9 6 28 112-100 52c-60 36-90 60-122 82l-2-38c60-60 120-110 174-196z" fill="url(#toothB)" />
        <path d="M752 136c-40 90-104 146-170 194l-2-20c70-60 120-100 172-174z" fill="#9aa5ad" />
        <path d="M700 200c-30 30-80 60-122 94l2-26c50-34 84-56 120-68z" fill="#d4e1ea" />
        <path d="M752 136c-30 50-70 80-110 116-30 22-48 42-62 60l-2-16c50-42 90-66 132-104z" fill="#6d777e" />
        <path d="M803 236c-60 50-150 80-223 138l6-20c60-44 140-86 217-118z" fill="#3c4348" />
        <path d="M803 240l-4 26c-60 40-140 60-214 120l-5-12c70-50 150-84 223-134z" fill="#b4c1cb" />
        <path d="M803 240l-2 28c-30 16-50 26-80 38l2-18c30-14 55-28 80-48z" fill="#e2ecf3" />
        <path d="M799 266l-6 28c-50 62-130 140-222 186l12-90c66-60 150-90 216-124z" fill="url(#toothC)" />
        <path d="M793 294l8 60c-60 40-110 100-232 128l2-12c110-44 176-116 222-176z" fill="#8c989f" />
        <path d="M801 350c-40 36-70 64-148 106l-80 26c-2 0-4-4-2-6 100-32 162-94 230-120z" fill="#555d62" />
        <path d="M805 380l-4 32c-60 30-100 40-162 46 50-20 110-60 166-78z" fill="#7d7d80" />
        <path d="M804 410c-60 40-110 44-170 48-30 10-50 20-72 26l-17 42c50 16 150 34 236-4z" fill="url(#toothC)" />
        <path d="M545 526c60 26 150 26 236-2l-4 18c-50 16-100 20-140 16-30-6-64-18-92-32z" fill="#4b5358" />
        <path d="M640 560c40 4 90 0 136-16l-8 28-20 40c-40-6-76-30-108-52z" fill="#7c878f" />
        <path d="M803 236c8 30 9 60 9 90s-3 64-9 84l-12-80 4-60z" fill="#66727b" />
        <path d="M772 124l14 50 17 62" stroke="#4c555c" strokeWidth="3" />
        <path d="M537 136c10 40 30 80 40 134" stroke="#3e464b" strokeWidth="8" />
        <path d="M560 300c2-16 8-26 16-28l4 58-16 6z" fill="#929da5" />
        <path d="M560 336l16-4 6 50-6 22c-12-6-16-40-16-68z" fill="#dce8f0" />
        <path d="M582 390l-10 20-22 110" stroke="#3e464b" strokeWidth="5" />
        <path d="M548 445l6 20-8-6z" fill="#8a959d" />
        <path d="M76 344h42l3-3h145l4-3h290l14-6M79 343v147l3 2v145l4 2v50" stroke="#3559ea" strokeWidth="3" />
        <path d="M433 155v358" stroke="#dc1c28" strokeWidth="3" />
        <circle cx="433" cy="337" r="21" stroke="#d81c2c" strokeWidth="3" />
        <path d="M434 326h15v22h-15z" fill="#42d8e8" />
        <path d="M454 335h28" stroke="#ee3342" strokeWidth="3" />
        <circle cx="480" cy="335" r="7" fill="#ee3342" />
        <path d="M433 283v12" stroke="#18e020" strokeWidth="6" />
        <path d="M433 292l22 22-22 22-22-22z" fill="#fff" stroke="#111" strokeWidth="4" />
        <path d="M433 304l10 10-10 10-10-10z" fill="#14d81c" />
      </svg>
    </main>
  );
}

function RightTools() {
  const brown = "#84452a";
  const mute = "#a4aeb5";
  return (
    <aside className="flex w-[69px] shrink-0 overflow-hidden bg-[#dce9f2] pt-px" aria-label="特征工具">
      <div className="flex w-10 flex-col">
        <GripRow />
        <Tool label="草绘"><path d="M2.5 2.5h18M2.5 6.5h18M2.5 10.5h18M2.5 14.5h18M2.5 18.5h18" stroke="#444" strokeDasharray="1 3" /><path d="M2 14c4-9 7-9 10-3 2 5 5 3 7-1" stroke="#1f74d8" strokeWidth="1.6" /></Tool>
        <Tool label="平面"><path d="M1.5 17.5l5-12h13l-5 12z" stroke={brown} strokeWidth="1.5" /></Tool>
        <Tool label="轴"><path d="M16 1L6 20" stroke={brown} strokeWidth="1.6" strokeDasharray="6 2" /></Tool>
        <Tool label="曲线"><path d="M2 17C4 7 9 10 12 11s4-3 9-5" stroke={brown} strokeWidth="1.6" /></Tool>
        <div className="flex items-center">
          <Tool label="点"><path d="M9 3l5 5M14 3L9 8M4 13l5 5M9 13l-5 5M14 11l5 5M19 11l-5 5" stroke={brown} strokeWidth="1.5" /></Tool>
          <button type="button" aria-label="更多点工具" className="pl-1"><svg viewBox="0 0 4 7" className="h-[7px] w-1" fill="#222" aria-hidden="true"><path d="M0 0l4 3.5L0 7z" /></svg></button>
        </div>
        <Tool label="坐标系"><path d="M2 11h17M6 18L17 4M6 4l11 14" stroke={brown} strokeWidth="1.3" /><path d="M2 1l2 3 2-3M4 4v3M2 16h4l-4 4h4M17 9l4 4M21 9l-4 4" stroke="#678496" /></Tool>
        <Tool label="分析特征"><path d="M5 5l6 6M11 5l-6 6M12 1l2 3M16 6l2 4" stroke={brown} strokeWidth="1.5" /><path d="M2.5 13.5h17v7h-17z" fill="#ffe97a" stroke="#8a7a20" /><path d="M6.5 14v3M9.5 14v3M12.5 14v3M15.5 14v3" stroke="#8a7a20" /></Tool>
        <GripRow />
        <Tool label="注释"><path d="M1.5 2.5h13v8h-13z" fill="#ffffa0" stroke="#555" /><path d="M15 7.5h5l-6 11M14 14v5.500l4-2" strokeWidth="1.2" /></Tool>
        <Tool label="注释特征"><path d="M1.5 2.5h14v12h-14z" fill="#ffffa0" stroke="#555" /><circle cx="10" cy="10" r="5" stroke="#555" fill="#f6f6c8" /><path d="M7 13l3-6 3 6M15 8.5h5l-6 11M14 16v4l4-2" /></Tool>
        <Tool label="传播注释"><path d="M1.5 2.5h11v5h-11zM5.5 10.5h11v5h-11zM12 5.5h4l-2 4M16 13.5h4l-3 7M16 17v4l3-2" stroke="#8d989f" /></Tool>
        <GripRow />
        <Tool label="装配元件"><path d="M1.5 9.5l2-2h4l-1 9h8l2-1v3l-2 2h-13z" fill="#ffd84c" stroke="#8a6a10" /><path d="M1.5 9.5h4l2-2M5.5 9.5v7h9v4" stroke="#8a6a10" /><path d="M12.5 3.5l2-2h6v5l-2 2h-6z" fill="#7fe0de" stroke="#2c6a70" /><path d="M12 9l-4 4M8 9.5V13h4" stroke="#1c2f78" /></Tool>
        <Tool label="插入人体模型"><path d="M1.5 9.5l2-2h4l-1 9h8l2-1v3l-2 2h-13z" fill="#ffd84c" stroke="#8a6a10" /><path d="M1.5 9.5h4l2-2M5.5 9.5v7h9v4" stroke="#8a6a10" /><circle cx="17" cy="2.5" r="1.2" fill="#222" /><path d="M14 8l1-3h4l1 3M17 4v5l-2 5M17 9l2 5M12 9l-4 4M8 9.5V13h4" /></Tool>
        <Tool label="创建元件"><path d="M1.5 4.5l3-3h12v11l-3 4h-12z" fill="#ffe45a" stroke="#8a6a10" /><path d="M6.5 3.5l2-2h9v8l-2 2h-9z" fill="#6fdcdc" stroke="#2c7a80" /><path d="M12.5 10.5h5l3 3v7h-8z" fill="#fff" stroke="#444" /></Tool>
        <Tool label="孔"><path d="M1 6h6l2 3v9H3l-2-4zM21 6h-6l-2 3v9h4l4-4z" fill="#b6f0f4" stroke="none" /><path d="M1 14l6-7M3 18l5-6M14 12l5-6M14 17l7-8" stroke="#40c8d8" /><path d="M2 5.5h18" stroke="#667" strokeDasharray="3 1" /><path d="M6 5.5l2 3v9h6v-9l2-3" stroke="#444" /></Tool>
        <Tool label="壳"><path d="M2.5 11.5h6l5-8 7 9-5 7h-13zM13.5 3.5l-6-1M8.5 11.5l7 8M13.5 3.5l-2 8 4 8" stroke={mute} fill="#e6ecef" /></Tool>
        <Tool label="倒圆角"><path d="M2 4c8-3 17 3 17 11l-6 5c2-6-2-11-10-11z" stroke={mute} fill="#d6dde1" /></Tool>
      </div>
      <div className="flex w-[29px] flex-col">
        <GripRow />
        <Tool label="拉伸"><path d="M2.5 11.5h8v8h-8z" fill="#8ff0ee" stroke="#2c7a80" /><path d="M3 11l7-8M11 11l7-8M11 19l7-7" stroke="#555" strokeDasharray="2 1" /><path d="M10 2.5h9v9" stroke="#223" strokeWidth="1.5" /></Tool>
        <Tool label="旋转"><path d="M11.5 1v19" stroke="#222" strokeDasharray="4 2" /><circle cx="5" cy="12" r="3" fill="#c8f4f4" stroke="#2c5a6a" /><circle cx="17.5" cy="12" r="3" fill="#c8f4f4" stroke="#2c5a6a" /><path d="M5 9c3-5 5-3 10 4M8 13c5-7 7-9 10-4" stroke="#555" strokeDasharray="2 1" /></Tool>
        <Tool label="可变截面扫描"><path d="M2.5 5.5l5-2 12 8v8h-10l-3-8z" fill="#c8efef" stroke="#2c5a6a" /><path d="M3 7l7 12V14z" fill="#d8b4b0" stroke="none" /><path d="M4 6l15 13" stroke="#4a7a80" /><path d="M1.5 5.5l4-4 2 2-3 4z" fill="#7fe8e6" stroke="#2c5a6a" /></Tool>
        <Tool label="边界混合"><path d="M2.5 16.5c2-6 3-9 7-13 4-1 7-1 11 2-3 4-5 7-6 13-4-4-8-4-12-2z" fill="#dcf6f6" stroke="#2c7080" /><path d="M8 15c1-5 3-8 6-12M5 9c4-2 8-1 12 1" stroke="#2c7080" /></Tool>
        <Tool label="填充"><path d="M3.5 6.5c5-4 10-4 15 0v12c-4-4-8-4-12-1-1 1-2 1-3 1z" fill="#d2f2f2" stroke="#4a7a86" /></Tool>
        <GripRow />
        <Tool label="镜像"><path d="M11.5 2v18" stroke="#8d989f" /><path d="M2.5 18.5v-12c4 0 6 4 6 12zM20.5 18.5v-12c-4 0-6 4-6 12z" stroke={mute} fill="#e4ebef" /></Tool>
        <Tool label="合并"><path d="M9.5 2.5h10v10h-10z" stroke={mute} fill="#eef2f4" /><circle cx="8.5" cy="13.5" r="5.5" stroke={mute} fill="#e4ebef" fillOpacity=".6" /></Tool>
        <Tool label="修剪"><path d="M8.5 4.5h11v11h-5c-1-5-3-7-6-7z" stroke={mute} fill="#f2f5f7" /><path d="M3 15c1-4 4-6 6-5l4 7H4z" fill="#d0d7db" stroke="none" /></Tool>
        <Tool label="阵列"><path d="M2.5 2.5h16v17h-16z" fill="#f6f8fa" stroke="#7f8b93" /><path d="M6 7h12M6 11h12M6 15h12" stroke="#8a959c" strokeWidth="1.5" strokeDasharray="1.5 2.5" /></Tool>
      </div>
    </aside>
  );
}

function SearchPopup() {
  const pill = "flex h-[18px] items-center justify-center rounded-full border border-[#8cc4ea] bg-linear-to-b from-[#eef8fe] to-[#b4dcf6]";
  return (
    <section aria-label="搜索面板" className="absolute right-0 bottom-[30px] z-10 flex h-[49px] w-[293px] flex-col overflow-hidden border-2 border-r-0 border-[#8ec9e4] bg-[#f5f7f9] text-[12px] text-[#1d5a94]">
      <div className="flex h-[22px] items-center bg-linear-to-b from-[#e8f6fe] to-[#a8d9f8]">
        <input aria-label="搜索内容" className="h-[22px] w-[122px] rounded-tl-[4px] border-b border-[#c8d4dc] bg-[#f5f7f9] outline-none" />
        <svg viewBox="0 0 22 22" className="h-[22px] w-[22px] shrink-0" aria-hidden="true"><path d="M0 0c8 0 9 4 12 11s5 11 10 11H0z" fill="#f5f7f9" /><path d="M0 .5c8 0 9 4 12 11s5 10 10 10" fill="none" stroke="#6fb2e0" /></svg>
        <button type="button" className={`w-[69px] ${pill}`}>
          <svg viewBox="0 0 20 16" className="h-4 w-5 shrink-0" aria-hidden="true"><circle cx="13" cy="6" r="4.5" fill="#e8f6ff" stroke="#3f9be8" strokeWidth="2" /><path d="M9 10l-5 4" stroke="#1767c0" strokeWidth="3" strokeLinecap="round" /></svg>
          <span className="flex gap-1 pl-1"><span>搜</span><span>索</span></span>
        </button>
        <button type="button" className={`ml-2 w-[38px] ${pill}`}>网址</button>
        <button type="button" className={`w-[18px] ${pill}`}>词</button>
        <button type="button" aria-label="关闭搜索" className="ml-[3px] flex h-[18px] w-[9px] shrink-0 items-center"><svg viewBox="0 0 9 9" className="h-[9px] w-[9px]" stroke="#124a84" strokeWidth="2.5" aria-hidden="true"><path d="M1 1l7 7M8 1L1 8" /></svg></button>
      </div>
      <div className="flex flex-1 items-start justify-end pr-5">
        <button type="button" aria-label="弹出" className="flex h-5 w-5 items-center justify-center rounded-full border border-[#6faed4] bg-linear-to-b from-[#e8f6fe] to-[#a8d9f8]">
          <svg viewBox="0 0 10 10" className="h-[10px] w-[10px]" fill="none" stroke="#1d5a94" aria-hidden="true"><path d="M.5.5h6v6h-6zM3.5 8.5v1h6v-6h-1M2.5 2.5l4 4M2.5 5V2.5H5" /></svg>
        </button>
      </div>
    </section>
  );
}

const tasks: { icon: React.ReactNode; text: string; active?: boolean }[] = [
  { icon: <FolderIcon />, text: "825" },
  { icon: <CalcIcon />, text: "计算器" },
  { icon: <ChatIcon />, text: "与 ..." },
  { icon: <FolderIcon />, text: "软件夹" },
  { icon: <PartIcon />, text: "PRT..." },
  { icon: <FolderIcon />, text: "新..." },
  { icon: <FinderIcon />, text: "E:\\..." },
  { icon: <AsmIcon />, text: "123..." },
  { icon: <AsmIcon />, text: "ASM..." },
  { icon: <AsmIcon />, text: "ASM..." },
  { icon: <AsmIcon />, text: "ASM..." },
  { icon: <AsmIcon />, text: "ASM..." },
  { icon: <AsmIcon />, text: "ASM...", active: true },
];

function Taskbar() {
  return (
    <footer className="flex h-[30px] shrink-0 items-stretch bg-linear-to-b from-[#3d84f2] via-[#2561de] via-15% to-[#1d4fc4] text-white">
      <button type="button" className="flex w-[97px] shrink-0 items-center gap-1 rounded-r-[10px] bg-linear-to-b from-[#69b369] via-[#379a38] via-20% to-[#2c842c] pl-[10px] text-[20px] leading-7 italic shadow-[inset_-3px_0_4px_#1c6a24] [text-shadow:1px_1px_2px_#174a17]">
        <svg viewBox="0 0 20 20" className="h-5 w-5 shrink-0" aria-hidden="true">
          <path d="M3 3c3-2 5-1 7 0L8.5 9.5c-2-1-4-2-7-.5z" fill="#f0602c" />
          <path d="M11 3.5c3 1 5 1 8-.5L17.5 9c-2 1.5-5 2-8 .5z" fill="#7fce3c" />
          <path d="M1.2 10.5c3-1.5 5-1 7 0L6.7 17c-2-1-4-1.5-7 0z" fill="#4f8cf4" />
          <path d="M9.2 11c3 1.5 5 1 8-.5L15.7 17c-3 1.5-5 1.5-8 0z" fill="#fccc34" />
        </svg>
        开始
      </button>
      <nav aria-label="任务" className="flex min-w-0 flex-1 gap-[2px] pt-1 pb-[2px] pl-[10px]">
        {tasks.map((t, i) => (
          <button
            key={i}
            type="button"
            className={
              t.active
                ? "flex min-w-0 flex-1 items-center gap-[3px] overflow-hidden rounded-[3px] bg-[#1e50b8] pl-[9px] text-[12px] leading-4 whitespace-nowrap shadow-[inset_1px_1px_1px_#133a8c]"
                : "flex min-w-0 flex-1 items-center gap-[3px] overflow-hidden rounded-[3px] bg-linear-to-b from-[#5a9afa] via-[#3c80f2] via-15% to-[#3a7cee] pl-[9px] text-[12px] leading-4 whitespace-nowrap shadow-[inset_-1px_-1px_1px_#2458c4]"
            }
          >
            {t.icon}
            <span><Mixed text={t.text} /></span>
          </button>
        ))}
      </nav>
      <button type="button" aria-label="输入法" className="flex w-[35px] shrink-0 items-center justify-center">
        <svg viewBox="0 0 14 12" className="h-3 w-[14px]" aria-hidden="true"><path d="M1 5h12v6.5H1z" fill="#111" stroke="#ddd" strokeWidth=".6" /><path d="M2 6.5h10M2 8.5h10M4 10.5h6" stroke="#fff" strokeDasharray="1 1" /><path d="M4 1c2 3 5-1 6 3" fill="none" stroke="#111" /></svg>
      </button>
      <div className="flex w-[95px] shrink-0 items-center border-l border-[#0a4aa8] bg-linear-to-b from-[#2fb0f8] via-[#1390ea] via-20% to-[#0f86e2]">
        <button type="button" aria-label="显示隐藏图标" className="-ml-[9px] flex h-[18px] w-[18px] items-center justify-center rounded-full border border-[#8cc8fa] bg-[#2a7ee4]">
          <svg viewBox="0 0 6 8" className="h-2 w-[6px]" fill="none" stroke="#fff" strokeWidth="2" aria-hidden="true"><path d="M5 0L1 4l4 4" /></svg>
        </button>
        <svg viewBox="0 0 16 16" className="h-4 w-4 shrink-0" aria-hidden="true"><path d="M8 .7c2 1.5 4.5 2 6.5 1.8 0 6-1 10-6.5 12.8C2.5 12.5 1.5 8.5 1.5 2.5 4 2.5 6 2 8 .7z" fill="#58a83c" stroke="#f6ecb0" strokeWidth="1.5" /><path d="M9.5 3L5 8.5h2.5L6.5 13 11 7H8.5z" fill="#fff" /></svg>
        <span className="pl-[2px]"><ChatIcon /></span>
        <time className="pl-2 text-[10px] leading-4">14:48</time>
      </div>
    </footer>
  );
}

export default function App() {
  return (
    <div className="relative flex h-screen min-w-[900px] flex-col overflow-hidden bg-[#004e98] font-['Liberation_Mono','Noto_Sans_CJK_SC',monospace]">
      <div className="mr-[132px] flex min-h-0 flex-1 flex-col">
        <TitleBar />
        <div className="flex min-h-0 flex-1 flex-col border-x-4 border-b-4 border-x-[#0a48dc] border-b-[#0831b8] bg-[#dbe8f1]">
          <nav aria-label="主菜单" className="flex h-[26px] shrink-0 items-center gap-[14px] bg-linear-to-b from-[#f3f8fb] to-[#e0ebf2] pt-[6px] pl-[7px] text-[12px] leading-4 text-[#333b42]">
            {menus.map(([name, key, tail]) => (
              <button key={name} type="button" className="whitespace-nowrap">
                <Mixed text={name} /><span className="text-[10px]">(<u>{key}</u>){tail}</span>
              </button>
            ))}
          </nav>
          <ToolRows />
          <MessageArea />
          <div className="flex min-h-0 flex-1">
            <LeftPanel />
            <Viewport />
            <RightTools />
          </div>
        </div>
      </div>
      <Taskbar />
      <SearchPopup />
    </div>
  );
}
